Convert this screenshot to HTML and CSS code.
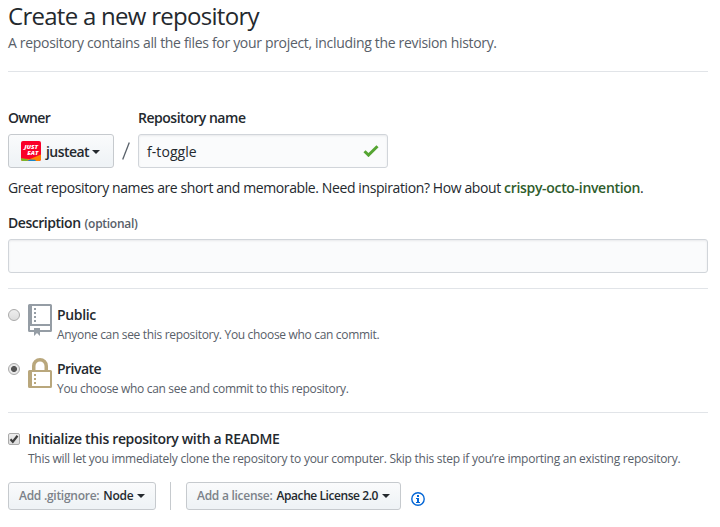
FILE: index.html
```html
<!DOCTYPE html>
<html lang="en">
<head>
<meta charset="utf-8">
<title>Create a new repository</title>
<link rel="stylesheet" href="styles.css">
</head>
<body>
<main class="page">
  <header class="head">
    <h1 class="title">Create a new repository</h1>
    <p class="lead">A repository contains all the files for your project, including the revision history.</p>
  </header>

  <section class="names">
    <div class="field owner">
      <span class="label tight">Owner</span>
      <button class="btn owner-btn" type="button">
        <svg class="avatar" viewBox="0 0 20 20">
          <rect width="20" height="20" rx="2" fill="#fa0029"/>
          <path d="M0 17.500L9 18 20 13.500v4.500a2 2 0 0 1-2 2H2a2 2 0 0 1-2-2z" fill="#ff8000"/>
          <path d="M0 17.300l7 1.200-1 1.500H2a2 2 0 0 1-2-2z" fill="#77b82a"/>
          <path d="M6 20l3-1.600 5 .3 1 1.300z" fill="#1687c9"/>
          <g class="brand" fill="#fff" text-anchor="middle"><text x="10.200" y="8" textLength="14" lengthAdjust="spacingAndGlyphs">JUST</text><text x="11.800" y="14" textLength="11" lengthAdjust="spacingAndGlyphs">EAT</text></g>
        </svg>
        <span class="owner-name">justeat</span><i class="caret"></i>
      </button>
    </div>
    <span class="slash"><svg viewBox="0 0 8 18"><path d="M7.300 .5L.7 17.500" fill="none" stroke="#586069" stroke-width="1.300"/></svg></span>
    <div class="field">
      <span class="label repo-label">Repository name</span>
      <div class="input repo-input"><span>f-toggle</span>
        <svg class="check" viewBox="0 0 16 12"><path d="M1.500 6.200l4 3.900L14.500 1.300" fill="none" stroke="#55a532" stroke-width="3"/></svg>
      </div>
    </div>
  </section>
  <p class="hint"><span class="hint-text">Great repository names are short and memorable. Need inspiration? How about </span><strong class="suggest">crispy-octo-invention</strong>.</p>

  <section class="description">
    <div class="desc-label"><span class="label">Description</span><span class="optional">(optional)</span></div>
    <div class="input"></div>
  </section>

  <section class="visibility">
    <div class="choice">
      <span class="radio"></span>
      <svg class="repo-icon" viewBox="0 0 24 32"><path fill="#959da5" fill-rule="evenodd" d="M1.500 0h21A1.500 1.500 0 0 1 24 1.500v25a1.500 1.500 0 0 1-1.500 1.500H12v4l-3-3-3 3v-4H1.500A1.500 1.500 0 0 1 0 26.500v-25A1.500 1.500 0 0 1 1.500 0zM4 2v18h18V2zM2 22v4h4v-2h6v2h10v-4z"/><path fill="#959da5" d="M6 4h2v2H6zM6 8h2v2H6zM6 12h2v2H6zM6 16h2v2H6z"/></svg>
      <div class="choice-text"><b class="name public">Public</b><span class="note">Anyone can see this repository. You choose who can commit.</span></div>
    </div>
    <div class="choice private">
      <span class="radio on"></span>
      <svg class="lock-icon" viewBox="0 0 24 30"><path fill="#b9a77c" fill-rule="evenodd" d="M4 12V8a8 8 0 0 1 16 0v4h2.500A1.500 1.500 0 0 1 24 13.500v15a1.500 1.500 0 0 1-1.500 1.500h-21A1.500 1.500 0 0 1 0 28.500v-15A1.500 1.500 0 0 1 1.500 12zM7.500 12h9V8a4.500 4.500 0 0 0-9 0zM4 14v14h18V14z"/><path fill="#b9a77c" d="M6 16h2v2H6zM6 20h2v2H6zM6 24h2v2H6z"/></svg>
      <div class="choice-text"><b class="name secret">Private</b><span class="note">You choose who can see and commit to this repository.</span></div>
    </div>
  </section>

  <section class="setup">
    <div class="readme">
      <span class="checkbox"><svg viewBox="0 0 10 10"><path d="M1.500 5.200l2.300 2.500L8.500 1.800" fill="none" stroke="#3f3f3f" stroke-width="2.200"/></svg></span>
      <div class="choice-text"><b class="name">Initialize this repository with a README</b><span class="note wide-note">This will let you immediately clone the repository to your computer. Skip this step if you’re importing an existing repository.</span></div>
    </div>
    <div class="menus">
      <button class="btn small ignore" type="button"><span class="key">Add .gitignore:</span><span class="value">Node</span><i class="caret"></i></button>
      <span class="divider"></span>
      <button class="btn small license" type="button"><span class="key">Add a license:</span><span class="value long">Apache License 2.0</span><i class="caret"></i></button>
      <svg class="info" viewBox="0 0 14 14"><circle cx="7" cy="7" r="6.200" fill="none" stroke="#0366d6" stroke-width="1.400"/><path fill="#0366d6" d="M6 3h2v2H6zM5 6h3v4h1v1H5v-1h1V7H5z"/></svg>
    </div>
  </section>
</main>
</body>
</html>
```
FILE: styles.css
```css
* { box-sizing: border-box; }
body {
  margin: 0;
  background: #fff;
  color: #24292e;
  font: 14px/21px "Open Sans", "Noto Sans", sans-serif;
  letter-spacing: -0.33px;
}
.page { width: 700px; margin-left: 8px; white-space: nowrap; }
.head { height: 72px; border-bottom: 1px solid #e1e4e8; }
.title { margin: 0; font-size: 24px; font-weight: 400; line-height: 32px; letter-spacing: -0.72px; }
.lead { margin: 0; color: #586069; line-height: 22px; letter-spacing: -0.32px; }
.names { display: flex; margin-top: 36px; }
.field { display: flex; flex-direction: column; }
.label { font-weight: 600; line-height: 20px; letter-spacing: -0.46px; }
.tight { letter-spacing: -0.68px; }
.repo-label { letter-spacing: -0.48px; }
.btn {
  display: flex;
  align-items: center;
  border: 1px solid #c6cace;
  border-radius: 3px;
  background: linear-gradient(#fafbfc, #eff3f6 90%);
  color: #24292e;
  font: inherit;
  font-weight: 600;
}
.owner-btn { width: 106px; height: 34px; margin-top: 6px; padding: 0 0 0 12px; }
.avatar { width: 20px; height: 20px; margin-right: 5px; }
.brand { font: italic 800 5px/1 "Open Sans", sans-serif; letter-spacing: 0; }
.owner-name { width: 43px; letter-spacing: -0.55px; }
.caret { border: 4px solid transparent; border-top-color: #24292e; border-bottom: 0; margin: 1px 0 0 3px; }
.small .caret { margin: 0 0 0 4px; }
.slash { display: flex; justify-content: center; width: 24px; padding-top: 34px; }
.slash svg { width: 8px; height: 18px; }
.input {
  display: flex;
  align-items: center;
  justify-content: space-between;
  height: 34px;
  border: 1px solid #d1d5da;
  border-radius: 3px;
  background: #fafbfc;
  box-shadow: inset 0 1px 2px rgba(27, 31, 35, .075);
}
.repo-input { width: 250px; margin-top: 6px; padding: 0 8px; letter-spacing: 0.07px; }
.check { width: 16px; height: 12px; }
.hint { margin: 9px 0 0; }
.hint-text { letter-spacing: -0.395px; }
.suggest { color: #2f5c2c; font-weight: 600; letter-spacing: -0.315px; }
.description { margin-top: 15px; padding-bottom: 15px; border-bottom: 1px solid #e1e4e8; }
.desc-label { display: flex; height: 26px; gap: 4px; }
.optional { color: #586069; font-size: 12px; font-weight: 600; letter-spacing: -0.28px; }
.visibility { height: 124px; padding-top: 15px; border-bottom: 1px solid #e1e4e8; }
.choice { display: flex; align-items: flex-start; height: 54px; }
.radio {
  width: 12px;
  height: 12px;
  margin: 5px 8px 0 0;
  border: 1px solid #aaa;
  border-radius: 50%;
  background: linear-gradient(#eee, #ddd);
}
.on { background: radial-gradient(circle, #555 0 2.6px, #e8e8e8 3.4px); }
.repo-icon { width: 24px; height: 32px; }
.lock-icon { width: 24px; height: 30px; }
.choice-text { display: flex; flex-direction: column; }
.choice .choice-text { margin-left: 5px; }
.name { font-weight: 600; line-height: 22px; letter-spacing: -0.34px; }
.secret { letter-spacing: -0.53px; }
.note { color: #586069; font-size: 12px; line-height: 18px; letter-spacing: -0.32px; }
.wide-note { letter-spacing: -0.265px; }
.readme { display: flex; margin-top: 15px; }
.checkbox {
  width: 12px;
  height: 12px;
  margin: 5px 8px 0 0;
  border: 1px solid #aaa;
  border-radius: 2px;
  background: linear-gradient(#eee, #ddd);
}
.checkbox svg { display: block; width: 10px; height: 10px; }
.menus { display: flex; margin-top: 14px; }
.small { height: 28px; padding: 0 0 0 10px; font-size: 12px; line-height: 20px; }
.ignore { width: 148px; }
.license { width: 215px; }
.key { margin-right: 4px; color: #7c8289; letter-spacing: -0.27px; }
.value { letter-spacing: -0.28px; }
.long { letter-spacing: -0.43px; }
.divider { width: 1px; margin: 0 15px 0 14px; background: #c6cace; }
.info { width: 14px; height: 14px; margin: 10px 0 0 10px; }
```
